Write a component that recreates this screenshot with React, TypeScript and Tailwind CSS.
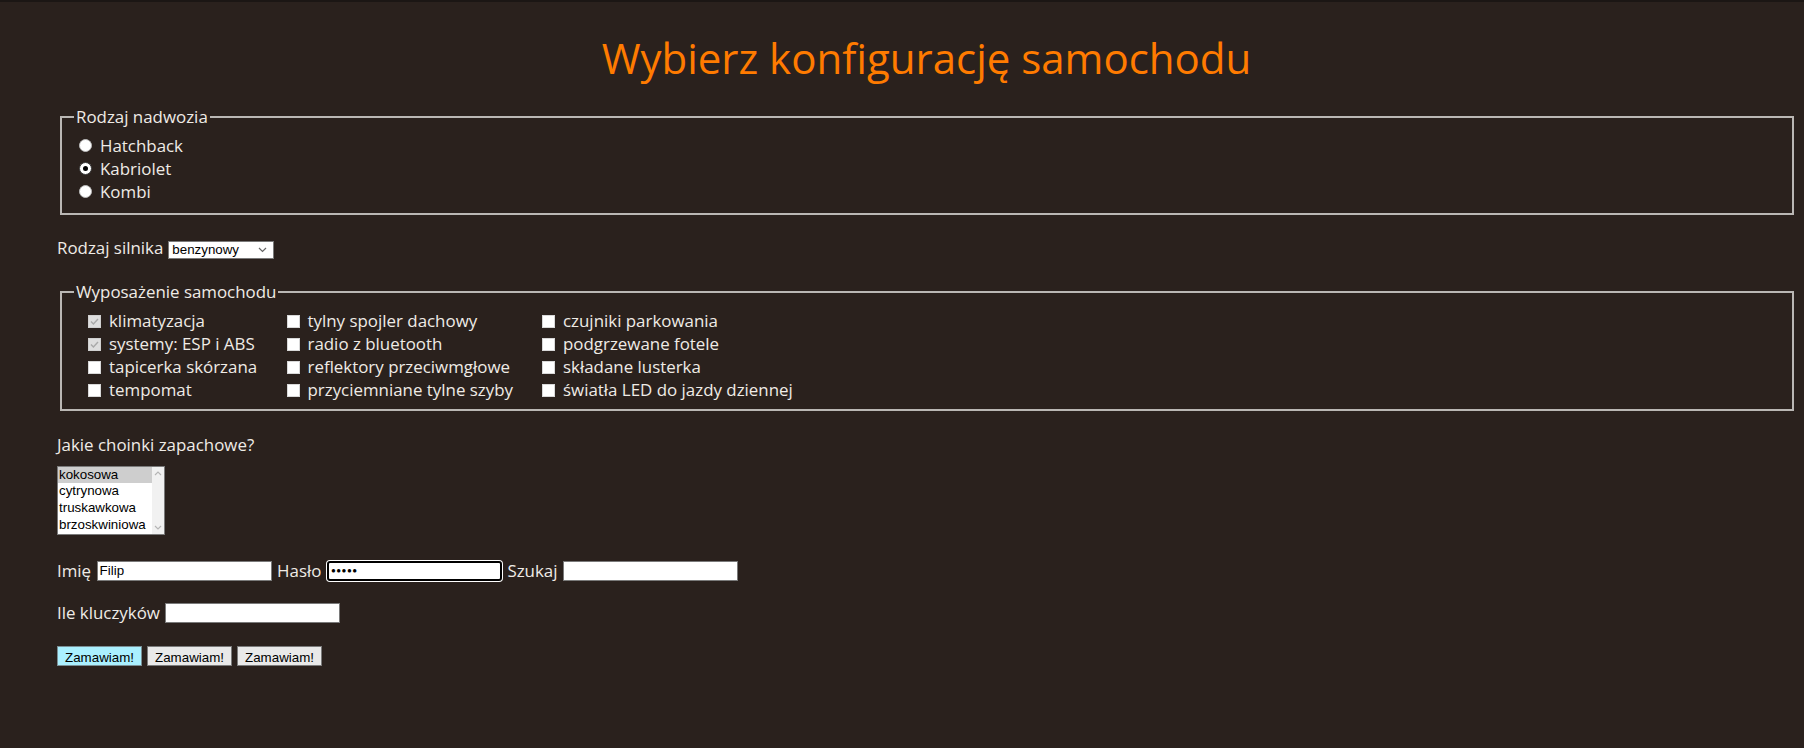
import React from 'react';

// Formularz konfiguracji samochodu
const nadwozia = [
    { label: 'Hatchback', checked: false },
    { label: 'Kabriolet', checked: true },
    { label: 'Kombi', checked: false },
];

// kolumny wyposażenia (w tabeli: wiersz po wierszu)
const wyposazenie = [
    { label: 'klimatyzacja', checked: true },
    { label: 'tylny spojler dachowy', checked: false },
    { label: 'czujniki parkowania', checked: false },
    { label: 'systemy: ESP i ABS', checked: true },
    { label: 'radio z bluetooth', checked: false },
    { label: 'podgrzewane fotele', checked: false },
    { label: 'tapicerka skórzana', checked: false },
    { label: 'reflektory przeciwmgłowe', checked: false },
    { label: 'składane lusterka', checked: false },
    { label: 'tempomat', checked: false },
    { label: 'przyciemniane tylne szyby', checked: false },
    { label: 'światła LED do jazdy dziennej', checked: false },
];

const choinki = ['kokosowa', 'cytrynowa', 'truskawkowa', 'brzoskwiniowa'];

const Radio = ({ checked }: { checked: boolean }) => (
    <span
        className={`ml-[5px] mr-[8px] w-[13px] h-[13px] rounded-full bg-white flex items-center justify-center shrink-0 ${checked ? 'border border-[#3a3a3a]' : 'border border-[#bdbdbd]'}`}
    >
        {checked && <span className="w-[5px] h-[5px] rounded-full bg-black" />}
    </span>
);

const Checkbox = ({ checked }: { checked: boolean }) => (
    <span
        className={`mr-[8px] w-[13px] h-[13px] shrink-0 flex items-center justify-center ${checked ? 'bg-[#dedede] border border-[#d0d0d0]' : 'bg-white border border-[#d8d8d8]'}`}
    >
        {checked && (
            <svg width="11" height="11" viewBox="0 0 11 11" fill="none">
                <path d="M2 5.6 L4.4 8 L9 3" stroke="#a9a9a9" strokeWidth="1.4" />
            </svg>
        )}
    </span>
);

const TextInput = ({ value = '', focused = false }: { value?: string; focused?: boolean }) => (
    <div
        className={`w-[175px] h-[20px] bg-white flex items-center px-[2px] text-black font-['Liberation_Sans',Arial,sans-serif] ${focused ? 'border-2 border-black rounded-[3px] ring-1 ring-white' : 'border border-[#7a7a7a]'}`}
    >
        {focused ? <span className="text-[8px] tracking-[0.5px] leading-none">●●●●●</span> : <span className="text-[13.33px]">{value}</span>}
    </div>
);

export default function App() {
    return (
        <div className="min-h-screen bg-[#2a211d] border-t-2 border-[#1b1614] pl-[57px] pr-[8px] pb-10 font-['Open_Sans',sans-serif] text-[16.9px] leading-[22px] text-[#efebe6]">
            <h1 className="mt-[29px] text-center text-[42px] leading-[54px] font-normal text-[#ff7b00]">
                Wybierz konfigurację samochodu
            </h1>

            {/* Nadwozie */}
            <fieldset className="mt-[21px] ml-[3px] mr-[2px] border-2 border-[#bab7b4] pl-[12px] pb-[10px]">
                <legend className="px-[2px] leading-[22px]">Rodzaj nadwozia</legend>
                <div className="mt-[6px] flex flex-col">
                    {nadwozia.map((n) => (
                        <div key={n.label} className="h-[23px] flex items-center">
                            <Radio checked={n.checked} />
                            <span>{n.label}</span>
                        </div>
                    ))}
                </div>
            </fieldset>

            {/* Silnik */}
            <div className="mt-[22px] h-[22px] flex items-center">
                <span>Rodzaj silnika</span>
                <div className="ml-[5px] mt-[4px] w-[106px] h-[18px] bg-white border border-[#7a7a7a] flex items-center justify-between pl-[3px] pr-[6px] text-[13.33px] text-black font-['Liberation_Sans',Arial,sans-serif]">
                    <span>benzynowy</span>
                    <svg width="9" height="6" viewBox="0 0 9 6" fill="none">
                        <path d="M1 1 L4.5 4.5 L8 1" stroke="#666" strokeWidth="1.2" />
                    </svg>
                </div>
            </div>

            {/* Wyposażenie */}
            <fieldset className="mt-[22px] ml-[3px] mr-[2px] border-2 border-[#bab7b4] pl-[12px] pb-[7px]">
                <legend className="px-[2px] leading-[22px]">Wyposażenie samochodu</legend>
                <div className="mt-[6.5px] ml-[14px] grid grid-cols-[198.5px_255.5px_auto]">
                    {wyposazenie.map((w) => (
                        <div key={w.label} className="h-[23px] flex items-center">
                            <Checkbox checked={w.checked} />
                            <span>{w.label}</span>
                        </div>
                    ))}
                </div>
            </fieldset>

            {/* Choinki */}
            <p className="mt-[23px]">Jakie choinki zapachowe?</p>
            <div className="mt-[10px] w-[108px] h-[69px] bg-white border border-[#7a7a7a] flex text-[13.33px] text-black font-['Liberation_Sans',Arial,sans-serif]">
                <div className="flex-1 flex flex-col">
                    {choinki.map((c, i) => (
                        <div key={c} className={`h-[16.7px] leading-[16.7px] px-[1px] whitespace-nowrap ${i === 0 ? 'bg-[#cecece]' : ''}`}>
                            {c}
                        </div>
                    ))}
                </div>
                <div className="w-[12px] bg-[#f1f1f1] flex flex-col justify-between items-center py-[4px]">
                    <svg width="8" height="5" viewBox="0 0 8 5" fill="none">
                        <path d="M1 4 L4 1 L7 4" stroke="#b5b5b5" strokeWidth="1.1" />
                    </svg>
                    <svg width="8" height="5" viewBox="0 0 8 5" fill="none">
                        <path d="M1 1 L4 4 L7 1" stroke="#b5b5b5" strokeWidth="1.1" />
                    </svg>
                </div>
            </div>

            {/* Dane */}
            <div className="mt-[25px] h-[22px] flex items-center gap-[5.5px]">
                <span>Imię</span>
                <TextInput value="Filip" />
                <span>Hasło</span>
                <TextInput focused />
                <span>Szukaj</span>
                <TextInput />
            </div>

            <div className="mt-[20.5px] h-[22px] flex items-center gap-[5.5px]">
                <span>Ile kluczyków</span>
                <TextInput />
            </div>

            {/* Przyciski */}
            <div className="mt-[22px] flex gap-[5px] font-['Liberation_Sans',Arial,sans-serif] text-[13.33px] text-black">
                <button className="w-[85px] h-[20px] bg-[#aaf0ff] border border-[#7a8f95]">Zamawiam!</button>
                <button className="w-[85px] h-[20px] bg-[#e9e9e9] border border-[#7a7a7a]">Zamawiam!</button>
                <button className="w-[85px] h-[20px] bg-[#e9e9e9] border border-[#7a7a7a]">Zamawiam!</button>
            </div>
        </div>
    );
}
